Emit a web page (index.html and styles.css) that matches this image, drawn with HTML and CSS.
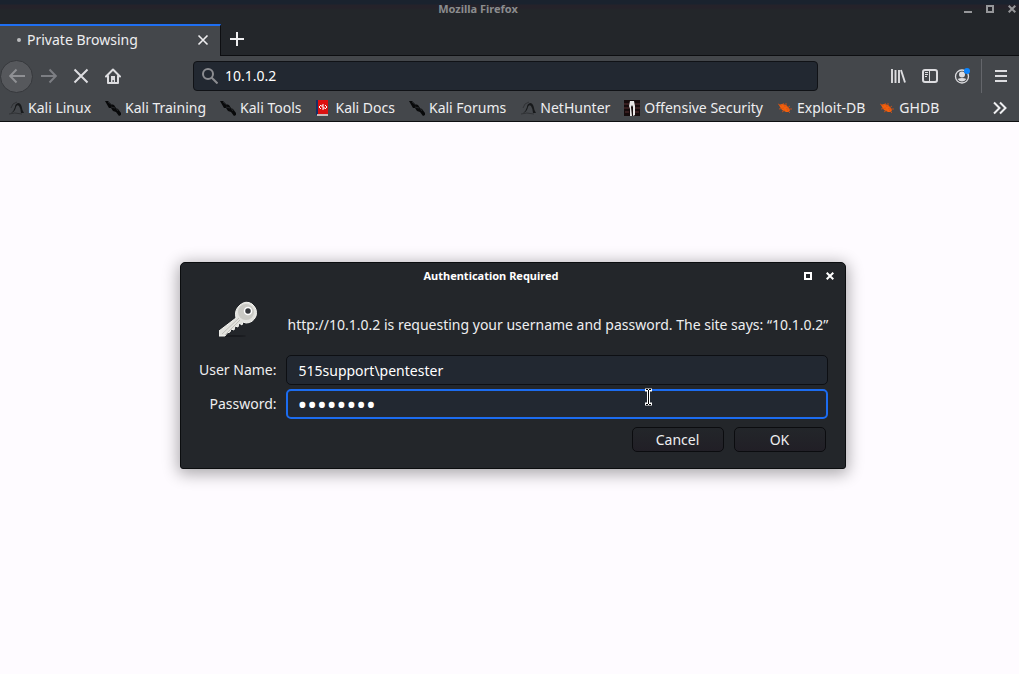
FILE: index.html
```html
<!DOCTYPE html>
<html lang="en">
<head>
<meta charset="utf-8">
<title>Mozilla Firefox</title>
<link rel="stylesheet" href="styles.css">
</head>
<body>
<svg class="defs" aria-hidden="true">
  <symbol id="dragon" viewBox="0 0 16 16"><path d="M3 13q3-2 4-6 0-3 3-4 3 0 4 5 0 2 2 5h-3q0-4-2-7-2-2-3 1-1 5-5 6z" fill="#17191b"/><path d="M3 8q1-5 6-6M1 14q5-2 13 0" stroke="#303235" fill="none"/></symbol>
  <symbol id="knife" viewBox="0 0 16 16"><path d="M0 1l3 0 3 3 3 1 2 3 2 1 3 4v2l-2 1-3-4-3-1-2-3-2 0z" fill="#08090a"/><path d="M3 2l4 3M6 7l4 1M11 8l2 3" stroke="#25272a" fill="none"/></symbol>
  <symbol id="bug" viewBox="0 0 16 16"><path d="M2 5l3-1 4 1 2 2 2 3-1 2-3 0-4-2-2-3z" fill="#f2600c"/><path d="M1 4l4 2M2 9l5-1M5 12l3-2M6 3l2 4M9 3v4M13 6l-4 3M15 9l-5 0M13 13l-3-3" stroke="#dc5210" stroke-width=".8"/></symbol>
</svg>
<div class="browser">
  <header class="titlebar">
    <h1 class="window-title">Mozilla Firefox</h1>
    <div class="window-controls">
      <button aria-label="Minimize"><svg width="8" height="8" viewBox="0 0 8 8"><path d="M0 7h8" stroke="currentColor" stroke-width="2"/></svg></button>
      <button aria-label="Maximize"><svg width="8" height="8" viewBox="0 0 8 8"><path d="M1 1h6v6H1z" fill="none" stroke="currentColor" stroke-width="2"/></svg></button>
      <button aria-label="Close"><svg width="8" height="8" viewBox="0 0 8 8"><path d="M.7.7l6.6 6.6M7.3.7L.7 7.3" stroke="currentColor" stroke-width="2"/></svg></button>
    </div>
  </header>
  <div class="tabs">
    <div class="tab">
      <span class="dot"></span>
      <span class="tab-label">Private Browsing</span>
      <button aria-label="Close tab"><svg width="12" height="12" viewBox="0 0 12 12"><path d="M1.5 1.5l9 9M10.5 1.5l-9 9" stroke="currentColor" stroke-width="1.6"/></svg></button>
    </div>
    <button class="new-tab" aria-label="New tab"><svg width="14" height="14" viewBox="0 0 14 14"><path d="M7 0v14M0 7h14" stroke="currentColor" stroke-width="2"/></svg></button>
  </div>
  <nav class="toolbar">
    <button class="back" aria-label="Back"><svg width="16" height="16" viewBox="0 0 16 16"><path d="M16 8H1.5M7.5 1.5L1.2 8l6.3 6.5" fill="none" stroke="currentColor" stroke-width="2"/></svg></button>
    <button class="tool dim" aria-label="Forward"><svg width="16" height="16" viewBox="0 0 16 16"><path d="M0 8h14.5M8.5 1.5L14.8 8l-6.3 6.5" fill="none" stroke="currentColor" stroke-width="2"/></svg></button>
    <button class="tool" aria-label="Stop"><svg width="16" height="16" viewBox="0 0 16 16"><path d="M1.5 1.5l13 13M14.5 1.5l-13 13" stroke="currentColor" stroke-width="2"/></svg></button>
    <button class="tool" aria-label="Home"><svg width="16" height="16" viewBox="0 0 16 16"><path d="M1 8.5l7-7 7 7M3 8v7h10V8" fill="none" stroke="currentColor" stroke-width="2" stroke-linejoin="round" stroke-linecap="round"/><path d="M6 14V8h4v6H8.800v-2H7.500v2z" fill="currentColor"/></svg></button>
    <label class="url">
      <svg width="16" height="16" viewBox="0 0 16 16"><circle cx="6" cy="6" r="5" fill="none" stroke="#8b8c90" stroke-width="2"/><path d="M9.5 9.5l6 6" stroke="#8b8c90" stroke-width="2"/></svg>
      <input type="text" value="10.1.0.2" aria-label="Search or enter address">
    </label>
    <button class="tool" aria-label="Library"><svg width="16" height="16" viewBox="0 0 16 16"><path d="M2 1v14M5.500 2v13M9 2v13M11 2l4 12.500" stroke="currentColor" stroke-width="1.900"/></svg></button>
    <button class="tool" aria-label="Sidebars"><svg width="16" height="16" viewBox="0 0 16 16"><rect x="1" y="2" width="14" height="12" rx="2" fill="none" stroke="currentColor" stroke-width="2"/><path d="M7.5 2v12" stroke="currentColor"/><path d="M3 4.5h3M3 6.5h3M3 8.5h2" stroke="currentColor"/></svg></button>
    <button class="tool" aria-label="Account"><svg width="16" height="16" viewBox="0 0 16 16"><circle cx="8" cy="8.5" r="6.500" fill="none" stroke="currentColor" stroke-width="1.300"/><circle cx="8" cy="6.500" r="3" fill="currentColor"/><path d="M3.500 11q4.500-2 9 0-4.500 5-9 0z" fill="currentColor"/><circle cx="13" cy="3" r="3" fill="#0a84ff"/></svg></button>
    <span class="divider"></span>
    <button class="tool" aria-label="Open menu"><svg width="12" height="12" viewBox="0 0 12 12"><path d="M0 1h12M0 6h12M0 11h12" stroke="currentColor" stroke-width="2"/></svg></button>
  </nav>
  <nav class="bookmarks">
    <a href="#"><svg><use href="#dragon"/></svg>Kali Linux</a>
    <a href="#"><svg><use href="#knife"/></svg>Kali Training</a>
    <a href="#"><svg><use href="#knife"/></svg>Kali Tools</a>
    <a href="#"><svg viewBox="0 0 16 16"><path d="M1 0h3v15H1z" fill="#152f65"/><path d="M3 0h10v14H3z" fill="#dc1010"/><path d="M2 14h11v2H2z" fill="#c9b9b9"/><path d="M6 5L4 7l2 2M10 5l2 2-2 2M9 5H7v2h2v2H7" fill="none" stroke="#fff"/></svg>Kali Docs</a>
    <a href="#"><svg><use href="#knife"/></svg>Kali Forums</a>
    <a href="#"><svg><use href="#dragon"/></svg>NetHunter</a>
    <a href="#"><svg viewBox="0 0 16 16"><path d="M0 0h16v16H0z" fill="#160b0c"/><path d="M0 4h5M11 4h5M0 8h5M11 8h5M1 12h4M11 12h4" stroke="#583032"/><path d="M6 1h4l1 5v9l-2 1V7L8 5 7 7l1 9H6V9L5 6z" fill="#e7e5e5"/></svg>Offensive Security</a>
    <a href="#"><svg><use href="#bug"/></svg>Exploit-DB</a>
    <a href="#"><svg><use href="#bug"/></svg>GHDB</a>
    <button class="more" aria-label="More bookmarks"><svg viewBox="0 0 14 14"><path d="M1 1.5L6.5 7 1 12.5M7 1.5L12.5 7 7 12.5" fill="none" stroke="currentColor" stroke-width="2"/></svg></button>
  </nav>
  <main class="page"></main>
</div>

<form class="dialog" role="dialog" aria-labelledby="dialog-title">
  <div class="dialog-bar">
    <h2 id="dialog-title">Authentication Required</h2>
    <div class="window-controls bright">
      <button type="button" aria-label="Maximize dialog"><svg width="8" height="8" viewBox="0 0 8 8"><path d="M1 1h6v6H1z" fill="none" stroke="currentColor" stroke-width="2"/></svg></button>
      <button type="button" aria-label="Close dialog"><svg width="8" height="8" viewBox="0 0 8 8"><path d="M.7.7l6.6 6.6M7.3.7L.7 7.3" stroke="currentColor" stroke-width="2"/></svg></button>
    </div>
  </div>
  <div class="fields">
    <svg class="key" viewBox="0 0 40 38"><ellipse cx="15" cy="35" rx="12" ry="1" fill="#191b1f"/><path d="M17 17q-2-8 4-13 6-5 12-1 6 5 4 12-3 7-10 7l-3-1-1 3-3-2-1 4-3-1-1 4-3-1-1 3-3 1-2 3-6 0v-5z" fill="#e2e2de" stroke="#f5f5f1"/><path d="M3 33l17-16M6 34l15-15" stroke="#c0bfb9"/><circle cx="27" cy="11" r="8" fill="#c9c9c4"/><circle cx="29" cy="10" r="3.5" fill="#35383c" stroke="#fff" stroke-width="1.500"/></svg>
    <p class="message">http://10.1.0.2 is requesting your username and password. The site says: “10.1.0.2”</p>
    <label for="user">User Name:</label>
    <input id="user" type="text" value="515support\pentester">
    <label for="pass">Password:</label>
    <input id="pass" class="active" type="password" value="password">
  </div>
  <div class="actions">
    <button type="button">Cancel</button>
    <button type="submit">OK</button>
  </div>
  <svg class="cursor" viewBox="0 0 8 18"><path d="M0 2h7M3.500 1v16M0 16h7" stroke="#fff" stroke-width="3"/><path d="M1 1.500h2M4 1.500h2M3.500 2v14M1 16.500h2M4 16.500h2" stroke="#000"/></svg>
</form>
</body>
</html>
```

FILE: styles.css
```css
* { box-sizing: border-box; }
body { margin: 0; background: #fefbff; font: 14px/20px "Noto Sans", sans-serif; color: #eeeef0; }
button { padding: 0; border: 0; background: none; color: inherit; font: inherit; display: flex; align-items: center; justify-content: center; }
input { font: inherit; color: #fff; outline: 0; min-width: 0; }
h1, h2, p { margin: 0; }
svg { display: block; flex: none; }
.defs { position: absolute; width: 0; height: 0; }
.browser { min-height: 100vh; display: flex; flex-direction: column; }
.page { flex: 1; background: #fefbff; }

.titlebar { display: grid; grid-template-columns: 1fr auto 1fr; height: 24px; padding: 0 3px 0 0; background: linear-gradient(#1a222e 0 4px, #25222a 5px 8px, #23262a 10px); }
.window-title { grid-column: 2; padding-right: 60px; font-size: 11px; line-height: 18px; font-weight: 700; color: #8b8c8e; }
.window-controls { display: flex; justify-content: flex-end; gap: 14px; height: 18px; color: #96979a; }
.bright { color: #fff; }

.tabs { display: flex; height: 32px; background: #23262a; border-bottom: 1px solid #0d0e11; }
.tab { width: 221px; height: 32px; padding: 0 11px 2px 17px; display: flex; align-items: center; background: #44474b; border-top: 2px solid #1f6ff2; border-right: 1px solid #0d0e11; }
.dot { width: 4px; height: 4px; border-radius: 50%; background: #bbbcbe; }
.tab-label { flex: 1; padding-left: 6px; }
.new-tab { width: 32px; height: 30px; }

.toolbar { display: flex; align-items: center; height: 40px; padding-right: 2px; background: #44474b; }
.back { width: 33px; height: 33px; border: 1px solid #36383c; border-radius: 50%; background: #56585c; color: #8f9094; }
.tool { width: 32px; height: 32px; color: #dddde0; }
.dim { color: #7c7e83; }
.url { flex: 1; height: 30px; margin: 0 64px; padding: 0 8px; display: flex; align-items: center; gap: 7px; background: #222831; border: 1px solid #101216; border-radius: 4px; }
.url input { flex: 1; padding: 0; border: 0; background: none; }
.divider { width: 1px; height: 34px; margin: 0 3px; background: #64666b; }

.bookmarks { display: flex; align-items: center; gap: 14px; height: 26px; padding: 0 12px 2px 8px; background: #44474b; border-bottom: 1px solid #0d0e11; }
.bookmarks a { display: flex; align-items: center; gap: 4px; color: inherit; text-decoration: none; white-space: nowrap; }
.bookmarks a svg { width: 16px; height: 16px; }
.more { margin-left: auto; }
.more svg { width: 14px; height: 14px; }

.dialog { position: absolute; top: 262px; left: calc(50% + 3px); transform: translateX(-50%); width: 666px; padding: 0 19px 16px 18px; background: #23262a; border: 1px solid #0b0d0f; border-radius: 5px 5px 3px 3px; box-shadow: 0 3px 16px 2px #0005; }
.dialog-bar { display: grid; grid-template-columns: 1fr auto 1fr; align-items: center; height: 26px; margin-right: -8px; }
.dialog-bar h2 { grid-column: 2; padding-right: 50px; font-size: 11px; line-height: 18px; font-weight: 700; color: #fff; }
.fields { display: grid; grid-template-columns: 78px 1fr; column-gap: 9px; row-gap: 4px; align-items: center; }
.fields label { text-align: right; }
.key { align-self: start; width: 40px; height: 38px; margin: 12px 0 0 20px; }
.message { padding: 26px 0 16px 2px; white-space: nowrap; }
.fields input { height: 30px; padding: 0 12px; background: #222831; border: 1px solid #0d0f13; border-radius: 5px; }
.fields .active { padding: 0 10px; border: 2px solid #1c6cf0; font-size: 26px; line-height: 26px; }
.actions { display: flex; justify-content: flex-end; gap: 10px; padding-top: 8px; }
.actions button { width: 92px; height: 25px; border: 1px solid #0b0c0f; border-radius: 5px; background: linear-gradient(#23262a, #211f26); }
.cursor { position: absolute; left: 464px; top: 125px; width: 8px; height: 18px; }
```
